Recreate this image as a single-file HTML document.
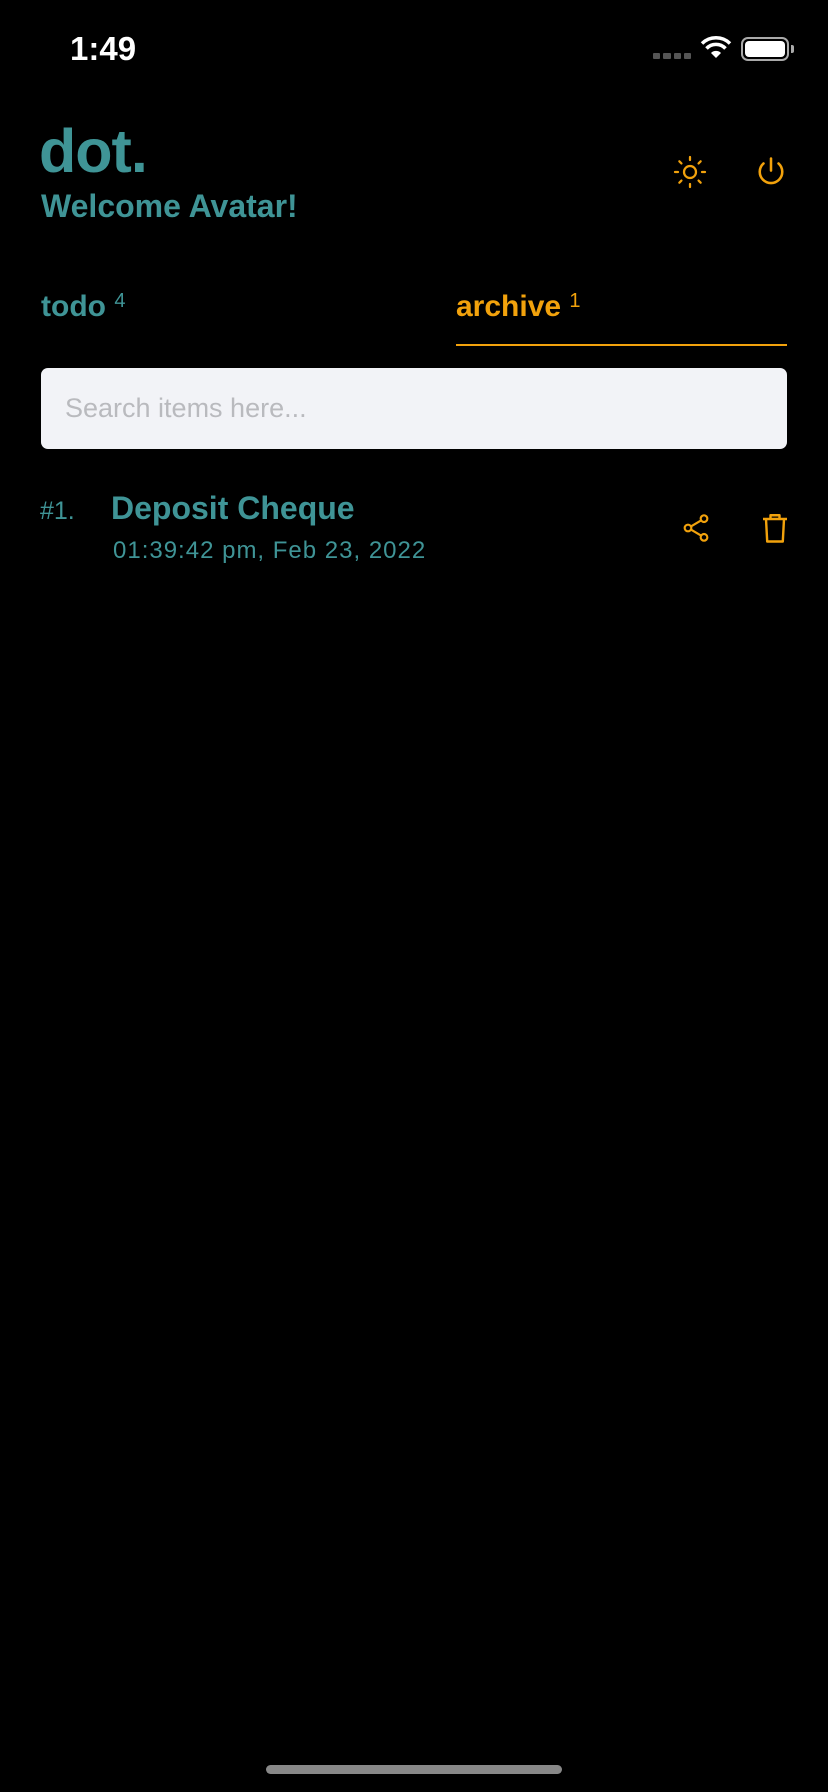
<!DOCTYPE html>
<html><head><meta charset="utf-8"><style>
*{margin:0;padding:0;box-sizing:border-box}
body{width:828px;height:1792px;background:#000;position:relative;overflow:hidden;font-family:"Liberation Sans",sans-serif}
.a{position:absolute;white-space:nowrap}
.t{color:#3f9496}
.o{color:#f2a20c}
</style></head><body>
<div class="a" style="left:70px;top:30px;font-size:33px;color:#fff;font-weight:600">1:49</div>
<div class="a" style="left:653px;top:53px;width:38px;height:6px;display:flex;gap:3px"><i style="flex:1;background:#555;border-radius:1px"></i><i style="flex:1;background:#555;border-radius:1px"></i><i style="flex:1;background:#555;border-radius:1px"></i><i style="flex:1;background:#555;border-radius:1px"></i></div>
<svg class="a" style="left:700px;top:36px" width="32" height="24" viewBox="0 0 32 24"><path d="M16 22 L11 17 A7 7 0 0 1 21 17 Z" fill="#fff"/><path d="M6.5 12.5 A13 13 0 0 1 25.5 12.5" stroke="#fff" stroke-width="3.5" fill="none"/><path d="M2 7.5 A20 20 0 0 1 30 7.5" stroke="#fff" stroke-width="3.5" fill="none"/></svg>
<div class="a" style="left:741px;top:37px;width:48px;height:24px;border:2px solid #aaa;border-radius:7px;padding:2px"><div style="width:100%;height:100%;background:#fff;border-radius:4px"></div></div>
<div class="a" style="left:791px;top:45px;width:3px;height:8px;background:#aaa;border-radius:0 2px 2px 0"></div>

<div class="a t" style="left:39px;top:116px;font-size:61px;font-weight:bold;letter-spacing:-1px">dot.</div>
<div class="a t" style="left:41px;top:188px;font-size:32px;font-weight:bold">Welcome Avatar!</div>
<svg class="a" style="left:672px;top:154px" width="36" height="36" viewBox="0 0 24 24" fill="none" stroke="#f2a20c" stroke-width="1.5" stroke-linecap="round"><circle cx="12" cy="12" r="4"/><path d="M12 2v2M12 20v2M4.9 4.9l1.4 1.4M17.7 17.7l1.4 1.4M2 12h2M20 12h2M4.9 19.1l1.4-1.4M17.7 6.3l1.4-1.4"/></svg>
<svg class="a" style="left:753px;top:154px" width="36" height="36" viewBox="0 0 24 24" fill="none" stroke="#f2a20c" stroke-width="1.7" stroke-linecap="round"><path d="M12 3v8"/><path d="M7 6.3a7.5 7.5 0 1 0 10 0"/></svg>

<div class="a t" style="left:41px;top:288px;font-size:30px;font-weight:bold">todo <sup style="font-size:20px;font-weight:normal;position:relative;top:2px">4</sup></div>
<div class="a o" style="left:456px;top:288px;font-size:30px;font-weight:bold">archive <sup style="font-size:20px;font-weight:normal;position:relative;top:2px">1</sup></div>
<div class="a" style="left:456px;top:344px;width:331px;height:2px;background:#f2a20c"></div>

<div class="a" style="left:41px;top:368px;width:746px;height:81px;background:#f2f3f7;border-radius:7px"></div>
<div class="a" style="left:65px;top:393px;font-size:27px;color:#b9babe">Search items here...</div>

<div class="a t" style="left:40px;top:497px;font-size:25px">#1.</div>
<div class="a t" style="left:111px;top:490px;font-size:32px;font-weight:bold">Deposit Cheque</div>
<div class="a t" style="left:113px;top:537px;font-size:24px;letter-spacing:1px">01:39:42 pm, Feb 23, 2022</div>
<svg class="a" style="left:680px;top:512px" width="32" height="32" viewBox="0 0 24 24" fill="none" stroke="#f2a20c" stroke-width="1.6"><circle cx="18" cy="5" r="2.5"/><circle cx="6" cy="12" r="2.5"/><circle cx="18" cy="19" r="2.5"/><path d="M8.2 10.8l7.6-4.5M8.2 13.2l7.6 4.5"/></svg>
<svg class="a" style="left:757px;top:510px" width="36" height="36" viewBox="0 0 24 24" fill="none" stroke="#f2a20c" stroke-width="1.6" stroke-linejoin="round"><path d="M4 6h16M9 6V3.5h6V6M6 6l0.8 15h10.4l0.8-15"/></svg>

<div class="a" style="left:266px;top:1765px;width:296px;height:9px;background:#888;border-radius:5px"></div>
</body></html>
